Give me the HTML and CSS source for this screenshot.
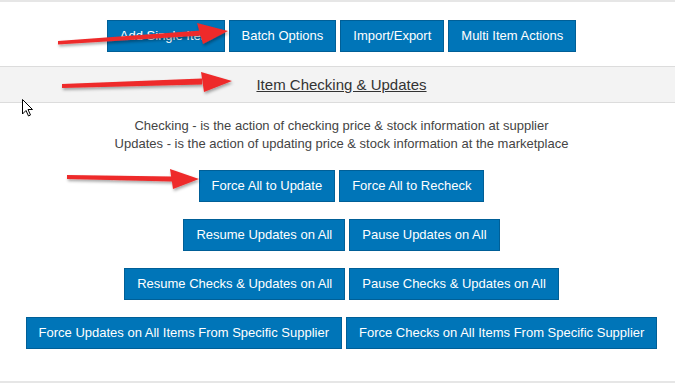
FILE: index.html
```html
<!DOCTYPE html>
<html>
<head>
<meta charset="utf-8">
<link rel="stylesheet" href="styles.css">
</head>
<body>
<div class="page">
  <div class="top">
    <div class="row">
      <a class="btn">Add Single Item</a>
      <a class="btn">Batch Options</a>
      <a class="btn">Import/Export</a>
      <a class="btn">Multi Item Actions</a>
    </div>
  </div>
  <div class="band"><a class="band-link">Item Checking &amp; Updates</a></div>
  <div class="content">
    <p class="desc">Checking - is the action of checking price &amp; stock information at supplier<br>Updates - is the action of updating price &amp; stock information at the marketplace</p>
    <div class="row">
      <a class="btn">Force All to Update</a>
      <a class="btn">Force All to Recheck</a>
    </div>
    <div class="row">
      <a class="btn">Resume Updates on All</a>
      <a class="btn">Pause Updates on All</a>
    </div>
    <div class="row">
      <a class="btn">Resume Checks &amp; Updates on All</a>
      <a class="btn">Pause Checks &amp; Updates on All</a>
    </div>
    <div class="row">
      <a class="btn">Force Updates on All Items From Specific Supplier</a>
      <a class="btn">Force Checks on All Items From Specific Supplier</a>
    </div>
  </div>
</div>
<svg class="overlay" width="675" height="383" viewBox="0 0 675 383">
  <defs>
    <filter id="sh" x="-20%" y="-50%" width="140%" height="200%">
      <feDropShadow dx="1" dy="2" stdDeviation="1.5" flood-color="#000" flood-opacity="0.35"/>
    </filter>
  </defs>
  <g fill="#ee2a2a" filter="url(#sh)">
    <polygon points="58,41 201,30.5 202,35.5 58,44.5"/>
    <polygon points="197,23 228,31 203,44"/>
    <polygon points="62,84 202,78.5 202,84.5 62,88"/>
    <polygon points="201,72 232,81 204,92"/>
    <polygon points="67,175 172,176.5 172,181.5 67,179"/>
    <polygon points="170,169 199,179 173,189"/>
  </g>
  <path d="M22.5,99.5 L22.5,114 L26,110.5 L28.5,116 L30.5,115 L28,109.5 L32.5,109.5 Z" fill="#fff" stroke="#000" stroke-width="1" stroke-linejoin="miter"/>
</svg>
</body>
</html>
```
FILE: styles.css
```css
html, body {
  margin: 0;
  padding: 0;
  background: #fff;
  font-family: "Liberation Sans", Arial, sans-serif;
}
.page {
  width: 675px;
  height: 383px;
  box-sizing: border-box;
  border-top: 2px solid #e6e6e6;
  border-bottom: 2px solid #e6e6e6;
  overflow: hidden;
  position: relative;
}
.top {
  padding: 18px 0 14px 8px;
}
.row {
  display: flex;
  justify-content: center;
  gap: 4px;
}
.btn {
  display: block;
  background: #0075b8;
  border: 1px solid #005f97;
  color: #fff;
  font-size: 13px;
  line-height: 16px;
  padding: 7px 12px;
  white-space: nowrap;
}
.band {
  background: #f3f3f3;
  border-top: 1px solid #dcdcdc;
  border-bottom: 1px solid #dcdcdc;
  height: 35px;
  padding-left: 8px;
  display: flex;
  align-items: center;
  justify-content: center;
}
.band-link {
  color: #333;
  font-size: 15px;
  text-decoration: underline;
}
.content {
  padding-left: 8px;
}
.desc {
  margin: 14px 0 17px;
  text-align: center;
  color: #444;
  font-size: 13px;
  line-height: 18px;
}
.content .row {
  margin-bottom: 17px;
}
.overlay {
  position: absolute;
  left: 0;
  top: 0;
  pointer-events: none;
}
```
